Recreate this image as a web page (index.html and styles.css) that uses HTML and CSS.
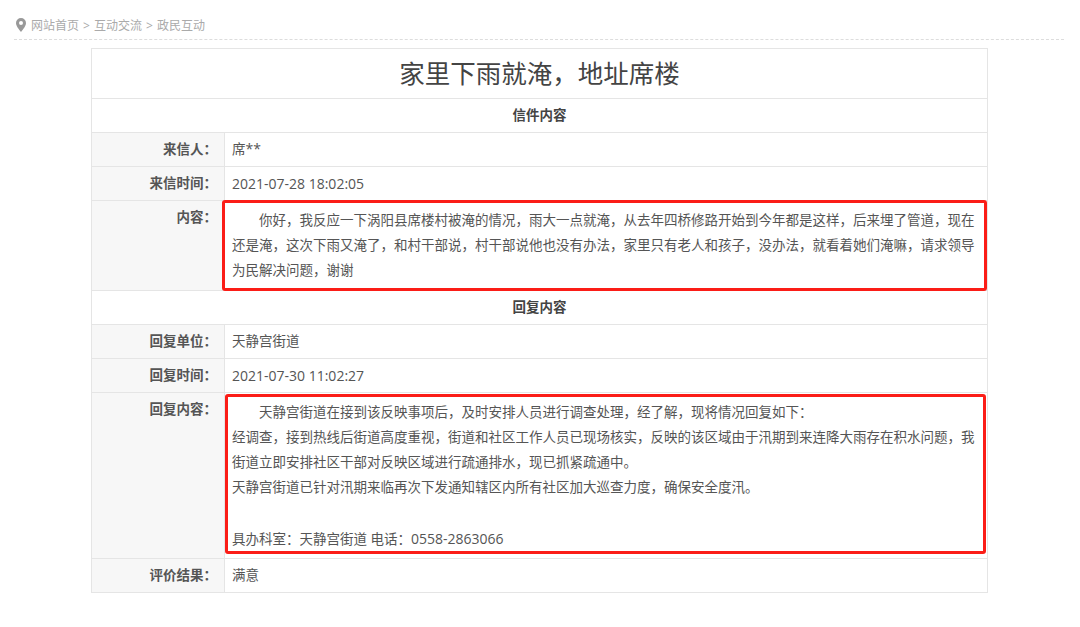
FILE: index.html
```html
<!doctype html>
<html lang="zh-CN">

<head>
  <meta charset="utf-8" />
  <title>家里下雨就淹，地址席楼</title>
  <link rel="stylesheet" href="styles.css">
</head>

<body>
  <div class="crumb">
    <svg class="crumb-pin" width="10" height="14" viewBox="0 0 10 14">
      <path fill="#999" fill-rule="evenodd" d="M5 0a5 5 0 0 1 5 5c0 3-3 6.500-5 9-2-2.500-5-6-5-9a5 5 0 0 1 5-5zm0 3a2 2 0 1 0 0 4 2 2 0 0 0 0-4z" />
    </svg>
    <a href="#">网站首页</a><span class="crumb-sep">&gt;</span><a href="#">互动交流</a><span class="crumb-sep">&gt;</span><a href="#">政民互动</a>
  </div>

  <table class="letter">
    <colgroup>
      <col class="col-label">
      <col>
    </colgroup>
    <tr>
      <td class="title" colspan="2">家里下雨就淹，地址席楼</td>
    </tr>
    <tr>
      <th class="section" colspan="2">信件内容</th>
    </tr>
    <tr>
      <th>来信人：</th>
      <td>席<span class="num">**</span></td>
    </tr>
    <tr>
      <th>来信时间：</th>
      <td class="num">2021-07-28 18:02:05</td>
    </tr>
    <tr>
      <th>内容：</th>
      <td class="body-cell">
        <div class="red-box box-ask"></div>
        <p class="indent">你好，我反应一下涡阳县席楼村被淹的情况，雨大一点就淹，从去年四桥修路开始到今年都是这样，后来埋了管道，现在还是淹，这次下雨又淹了，和村干部说，村干部说他也没有办法，家里只有老人和孩子，没办法，就看着她们淹嘛，请求领导为民解决问题，谢谢</p>
      </td>
    </tr>
    <tr>
      <th class="section" colspan="2">回复内容</th>
    </tr>
    <tr>
      <th>回复单位：</th>
      <td>天静宫街道</td>
    </tr>
    <tr>
      <th>回复时间：</th>
      <td class="num">2021-07-30 11:02:27</td>
    </tr>
    <tr>
      <th>回复内容：</th>
      <td class="body-cell">
        <div class="red-box box-reply"></div>
        <p class="indent">天静宫街道在接到该反映事项后，及时安排人员进行调查处理，经了解，现将情况回复如下：</p>
        <p>经调查，接到热线后街道高度重视，街道和社区工作人员已现场核实，反映的该区域由于汛期到来连降大雨存在积水问题，我街道立即安排社区干部对反映区域进行疏通排水，现已抓紧疏通中。</p>
        <p>天静宫街道已针对汛期来临再次下发通知辖区内所有社区加大巡查力度，确保安全度汛。</p>
        <p>&nbsp;</p>
        <p>具办科室：天静宫街道 电话：<span class="num">0558-2863066</span></p>
      </td>
    </tr>
    <tr>
      <th>评价结果：</th>
      <td>满意</td>
    </tr>
  </table>
</body>

</html>
```

FILE: styles.css
```css
* {
  box-sizing: border-box;
}

html {
  background-color: #fff;
}

body {
  margin: 0;
  padding: 0 16px 0 14px;
  color: #555;
  font-family: "Open Sans", "Noto Sans CJK SC", sans-serif;
  font-size: 13.5px;
}

p {
  margin: 0;
}

/* Breadcrumb */
.crumb {
  display: flex;
  align-items: center;
  height: 40px;
  padding: 11px 0 0 2px;
  color: #aaa;
  font-size: 12px;
  border-bottom: 1px dashed #ddd;
}

.crumb a {
  color: #aaa;
  text-decoration: none;
}

.crumb-pin {
  margin-right: 5px;
}

.crumb-sep {
  width: 15px;
  text-align: center;
}

/* Letter table */
.letter {
  width: 897px;
  margin: 8px 0 0 77px;
  border-collapse: collapse;
  table-layout: fixed;
  border: 1px solid #e5e5e5;
}

.col-label {
  width: 133px;
}

.letter th,
.letter td {
  height: 34px;
  padding: 0 7px;
  border: 1px solid #e5e5e5;
  line-height: 25.2px;
}

.letter th {
  padding-right: 7px;
  padding-top: 4px;
  color: #555;
  font-weight: bold;
  text-align: right;
  vertical-align: top;
  background-color: #f7f7f7;
}

.letter .section {
  padding: 1px 0 0;
  color: #444;
  text-align: center;
  vertical-align: middle;
  background-color: #fff;
}

.letter .title {
  height: 50px;
  color: #444;
  font-size: 25.5px;
  text-align: center;
}

.letter .body-cell {
  position: relative;
  padding-top: 7px;
  padding-bottom: 6px;
}

.num {
  font-size: 14px;
}

.indent {
  text-indent: 2em;
}

/* Hand-drawn highlight boxes that sit over the answer text */
.red-box {
  position: absolute;
  border: 3px solid #fb1d17;
  border-radius: 3px;
}

.box-ask {
  top: -1px;
  right: 0;
  bottom: -1px;
  left: -3px;
}

.box-reply {
  top: 1px;
  right: 1px;
  bottom: 4px;
  left: 0;
}
```
